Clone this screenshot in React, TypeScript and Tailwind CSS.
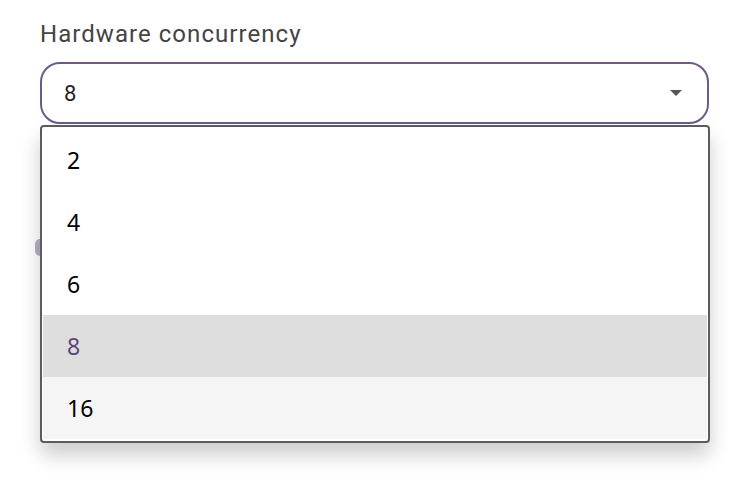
import React from "react";

export default function App() {
  const items = ["2", "4", "6", "8", "16"];
  return (
    <div className="relative w-[748px] h-[480px] bg-white overflow-hidden">
      <div className="pl-[40px] pr-[39px] pt-[18px]">
        <div
          className="text-[24px] leading-[32px] text-[#444444] tracking-[1.05px]"
          style={{ fontFamily: "Roboto, sans-serif" }}
        >
          Hardware concurrency
        </div>
        <div className="mt-[12px] h-[62px] rounded-[20px] border-2 border-[#6e5a86] flex items-center justify-between pl-[22px] pr-[24px]">
          <span
            className="text-[22px] text-[#1f1f1f]"
            style={{ fontFamily: "Roboto, sans-serif" }}
          >
            8
          </span>
          <svg width="14" height="8" viewBox="0 0 14 8">
            <path d="M1 1 L13 1 L7 7 Z" fill="#555555" />
          </svg>
        </div>
      </div>

      <div className="absolute left-[35px] top-[239px] w-[10px] h-[17px] rounded-full bg-[#b7b0c2] blur-[0.5px]" />

      <div className="absolute left-[40px] top-[125px] w-[670px] h-[318px] rounded-[4px] border-2 border-[#5c5c5c] bg-white shadow-[0_12px_20px_rgba(0,0,0,0.2)] p-[1px] pt-[2px]">
        {items.map((it) => {
          const selected = it === "8";
          const hover = it === "16";
          return (
            <div
              key={it}
              className={
                "h-[62px] flex items-center pl-[24px] text-[23px] " +
                (selected
                  ? "bg-[#dedede] text-[#5a4776]"
                  : hover
                  ? "bg-[#f5f5f5] text-[#000000]"
                  : "bg-white text-[#000000]")
              }
              style={{ fontFamily: "'Noto Sans', sans-serif" }}
            >
              {it}
            </div>
          );
        })}
      </div>
    </div>
  );
}
